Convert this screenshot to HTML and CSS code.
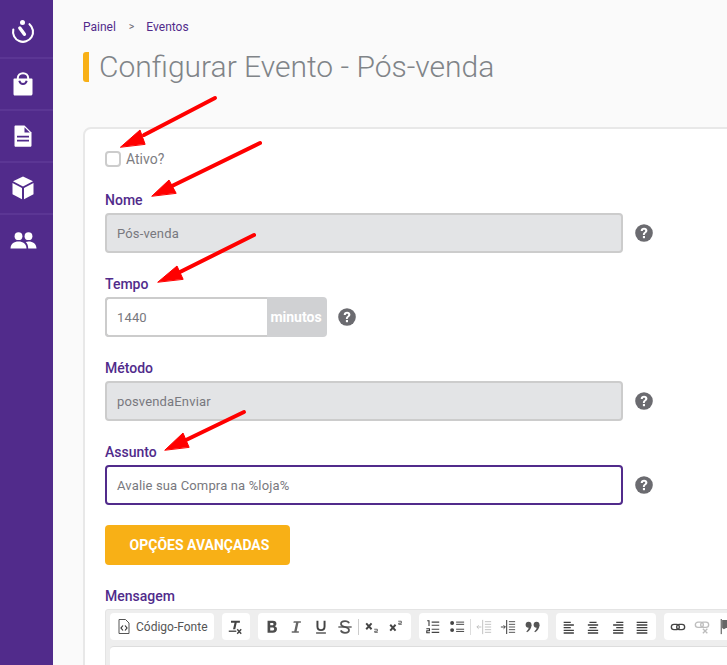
FILE: index.html
```html
<!DOCTYPE html>
<html lang="pt-BR">
<head>
<meta charset="utf-8">
<title>Configurar Evento - Pós-venda</title>
<link rel="stylesheet" href="styles.css">
</head>
<body>
<div class="app">
  <nav class="sidebar">
    <a class="nav-item"><svg width="26" height="26" viewBox="0 0 26 26"><path d="M3.300 10.500A10 10 0 1 0 19.500 5.200" fill="none" stroke="#fff" stroke-width="2.100" stroke-linecap="round"/><circle cx="12.500" cy="3.600" r="2.500" fill="#fff"/><path d="M9.800 9l4.600 6.300" stroke="#fff" stroke-width="3.400" stroke-linecap="round"/></svg></a>
    <a class="nav-item"><svg width="22" height="24" viewBox="0 0 22 24"><path d="M2.300 6.500h17.400c.5 0 .8.300.8.800v14.400c0 1-.8 1.800-1.700 1.800H2.900c-1 0-1.400-.8-1.400-1.800V7.300c0-.5.300-.8.800-.8z" fill="#fff"/><path d="M5.800 8V6a5.200 4.800 0 0 1 10.400 0v2" fill="none" stroke="#fff" stroke-width="2"/><path d="M7.300 8.700c.6 2.200 2 3.300 3.700 3.300s3.100-1.100 3.700-3.300" fill="none" stroke="#512b8b" stroke-width="2"/></svg></a>
    <a class="nav-item"><svg width="18" height="22" viewBox="0 0 18 22"><path d="M1.700.500h8.800l7 7v13c0 .7-.6 1.300-1.200 1.300H1.700c-.7 0-1.200-.6-1.200-1.300V1.700C.5 1.100 1 .5 1.700.5z" fill="#fff"/><path d="M10.500 2.300v5.200h5.300z" fill="#512b8b"/><path d="M3 10.800h12v1.700H3zM3 14.800h12v1.700H3z" fill="#512b8b"/></svg></a>
    <a class="nav-item"><svg width="22" height="24" viewBox="0 0 22 24"><path d="M11 .5l10 4.800L11 10.500 1 5.300z" fill="#fff"/><path d="M.5 7l9.500 5v11.300L.5 18.300zM21.500 7L12 12v11.300l9.500-5z" fill="#fff"/></svg></a>
    <a class="nav-item"><svg width="27" height="17" viewBox="0 0 27 17"><circle cx="8.500" cy="4.200" r="3.900" fill="#fff"/><circle cx="18.500" cy="4.200" r="3.900" fill="#fff"/><path d="M.5 16.500c0-4.500 3.500-7 8-7s8 2.500 8 7z" fill="#fff"/><path d="M18.200 16.500c0-2.600-.8-4.900-2.500-6.400 1-.4 1.900-.6 2.800-.6 4.500 0 8 2.500 8 7z" fill="#fff"/></svg></a>
  </nav>
  <main class="content">
    <div class="breadcrumb"><span>Painel</span><span class="sep">&gt;</span><span>Eventos</span></div>
    <h1 class="title">Configurar Evento - Pós-venda</h1>
    <section class="card">
      <label class="check"><span class="box"></span>Ativo?</label>

      <div class="field">
        <div class="label">Nome</div>
        <div class="row">
          <div class="input disabled wide">Pós-venda</div>
          <svg class="help"><use href="#help"/></svg>
        </div>
      </div>

      <div class="field">
        <div class="label">Tempo</div>
        <div class="row">
          <div class="group">
            <div class="group-input">1440</div>
            <div class="addon">minutos</div>
          </div>
          <svg class="help"><use href="#help"/></svg>
        </div>
      </div>

      <div class="field">
        <div class="label">Método</div>
        <div class="row">
          <div class="input disabled wide">posvendaEnviar</div>
          <svg class="help"><use href="#help"/></svg>
        </div>
      </div>

      <div class="field">
        <div class="label">Assunto</div>
        <div class="row">
          <div class="input focus wide">Avalie sua Compra na %loja%</div>
          <svg class="help"><use href="#help"/></svg>
        </div>
      </div>

      <button class="btn">OPÇÕES AVANÇADAS</button>

      <div class="label msg">Mensagem</div>
      <div class="editor">
        <div class="toolbar">
          <div class="tools"><span class="tool source"><svg width="12" height="15" viewBox="0 0 12 15"><path d="M1 .5h6.500L11 4v10.500H1z" fill="none" stroke="#555" stroke-width="1"/><path d="M5 6.500L3 9l2 2.500M7 6.500L9 9l-2 2.500" fill="none" stroke="#333" stroke-width="1.200"/></svg>Código-Fonte</span></div>
          <div class="tools narrow"><span class="tool"><svg class="ic" viewBox="0 0 18 18"><path d="M4.500 2h10v2.200h-3.600L9.300 11.500H6.800l1.700-7.300h-4z" fill="#444"/><path d="M2 13h8.500v1.500H2z" fill="#444"/><path d="M11.500 11.500l4.500 5M16 11.500l-4.500 5" stroke="#444" stroke-width="1.600"/></svg></span></div>
          <div class="tools main format">
            <span class="tool"><svg class="ic" viewBox="0 0 18 18"><path d="M4 2h6c2.800 0 4 1.400 4 3.300 0 1.300-.7 2.300-1.800 2.800 1.500.4 2.400 1.600 2.400 3.100 0 2.600-1.800 4.300-4.600 4.300H4zM7 4.500v2.600h2.300c.9 0 1.400-.5 1.400-1.300s-.5-1.300-1.400-1.300zM7 9.500v3.400h2.700c1.100 0 1.700-.7 1.700-1.700S10.800 9.500 9.700 9.500z" fill="#4c4c4c" fill-rule="evenodd"/></svg></span>
            <span class="tool"><svg class="ic" viewBox="0 0 18 18"><path d="M6.500 2.500h8v1.800h-2.700l-2.100 9.400h2.500v1.800h-8v-1.800h2.800l2.100-9.400H6z" fill="#666"/></svg></span>
            <span class="tool"><svg class="ic" viewBox="0 0 18 18"><path d="M5 2v6.500c0 2.600 1.500 4 4 4s4-1.400 4-4V2" fill="none" stroke="#444" stroke-width="2.200"/><path d="M3.500 15h11v1.500h-11z" fill="#444"/></svg></span>
            <span class="tool"><svg class="ic" viewBox="0 0 18 18"><path d="M13.500 4.800C13 3.300 11.500 2.500 9 2.500S4.500 3.700 4.500 5.500C4.500 10 13.500 8 13.500 12.300c0 2-2 3.200-4.500 3.200S4.800 14.300 4.300 12.800" fill="none" stroke="#555" stroke-width="2"/><path d="M1.500 8.300h15v1.400h-15z" fill="#444"/></svg></span>
            <span class="divider"></span>
            <span class="tool"><svg class="ic" viewBox="0 0 18 18"><path d="M2.500 5l6 6.500M8.500 5l-6 6.500" stroke="#444" stroke-width="2.200"/><path d="M11.500 11.500h3.500v2.200h-3v1.300h3.500" fill="none" stroke="#555" stroke-width="1"/></svg></span>
            <span class="tool"><svg class="ic" viewBox="0 0 18 18"><path d="M2.500 6.500l6 6.500M8.500 6.500l-6 6.500" stroke="#444" stroke-width="2.200"/><path d="M11.500 2.500h3.500v2.200h-3V6h3.500" fill="none" stroke="#555" stroke-width="1"/></svg></span>
          </div>
          <div class="tools main lists">
            <span class="tool"><svg class="ic" viewBox="0 0 18 18"><path d="M7.500 3.500h8.500M7.500 7h8.500M7.500 11.500h8.500M7.500 15h8.500" stroke="#444" stroke-width="1.300"/><path d="M2.500 2h2v6M1.500 11h3.500v2.200H2v2.300h3.500" fill="none" stroke="#333" stroke-width="1.200"/></svg></span>
            <span class="tool"><svg class="ic" viewBox="0 0 18 18"><circle cx="3.500" cy="4.500" r="2.200" fill="#444"/><circle cx="3.500" cy="12.500" r="2.200" fill="#444"/><path d="M8 3.500h9M8 6h9M8 11.500h9M8 14h9" stroke="#444" stroke-width="1.100"/></svg></span>
            <span class="divider light"></span>
            <span class="tool"><svg class="ic dim" viewBox="0 0 18 18"><path d="M7.500 1v16" stroke="#444" stroke-width="1"/><path d="M10 3h7M10 6h7M10 9h7M10 12h7M10 15h7" stroke="#444" stroke-width="1"/><path d="M1 9h5M1 9l2-2M1 9l2 2" fill="none" stroke="#444" stroke-width="1"/></svg></span>
            <span class="tool"><svg class="ic" viewBox="0 0 18 18"><path d="M7.500 1v16" stroke="#444" stroke-width="1.200"/><path d="M10 3h7M10 6h7M10 9h7M10 12h7M10 15h7" stroke="#444" stroke-width="1"/><path d="M1 9h5M6 9L4 7M6 9l-2 2" fill="none" stroke="#333" stroke-width="1"/></svg></span>
            <span class="tool"><svg class="ic" viewBox="0 0 18 18"><circle cx="4" cy="6.500" r="3.300" fill="#555"/><path d="M7.300 6.500c0 4-2 7-5 8.500l-.8-1c2-1.500 2.700-3.500 2.700-5z" fill="#555"/><circle cx="13" cy="6.500" r="3.300" fill="#555"/><path d="M16.300 6.500c0 4-2 7-5 8.500l-.8-1c2-1.500 2.700-3.500 2.700-5z" fill="#555"/></svg></span>
          </div>
          <div class="tools main align">
            <span class="tool"><svg class="ic" viewBox="0 0 18 18"><path d="M3 3h8v1.500H3zM3 6h11.500v1.500H3zM3 9h8v1.500H3zM3 12h11.500v1.500H3zM3 15h11.500v1.500H3z" fill="#3e3e3e"/></svg></span>
            <span class="tool"><svg class="ic" viewBox="0 0 18 18"><path d="M5 3h8v1.500H5zM3.200 6h11.600v1.500H3.200zM5 9h8v1.500H5zM3.200 12h11.600v1.500H3.200zM3.200 15h11.600v1.500H3.200z" fill="#3e3e3e"/></svg></span>
            <span class="tool"><svg class="ic" viewBox="0 0 18 18"><path d="M7 3h8v1.500H7zM3.500 6H15v1.500H3.500zM7 9h8v1.500H7zM3.500 12H15v1.500H3.500zM3.500 15H15v1.500H3.500z" fill="#3e3e3e"/></svg></span>
            <span class="tool"><svg class="ic" viewBox="0 0 18 18"><path d="M3 3h12v1.500H3zM3 6h12v1.500H3zM3 9h12v1.500H3zM3 12h12v1.500H3zM3 15h12v1.500H3z" fill="#3e3e3e"/></svg></span>
          </div>
          <div class="tools main">
            <span class="tool"><svg class="ic" viewBox="0 0 18 18"><rect x="1.500" y="6" width="9" height="6" rx="3" fill="none" stroke="#444" stroke-width="1.500"/><rect x="7.500" y="6" width="9" height="6" rx="3" fill="none" stroke="#444" stroke-width="1.500"/></svg></span>
            <span class="tool"><svg class="ic dim" viewBox="0 0 18 18"><rect x="1.500" y="3.500" width="9" height="6" rx="3" fill="none" stroke="#444" stroke-width="1.500"/><rect x="7.500" y="3.500" width="9" height="6" rx="3" fill="none" stroke="#444" stroke-width="1.500"/><path d="M10 11l5 5M15 11l-5 5" stroke="#444" stroke-width="1.500"/></svg></span>
            <span class="tool"><svg class="ic" viewBox="0 0 18 18"><path d="M2.500 0v17" stroke="#333" stroke-width="1"/><path d="M3.500 1h9v9H8l-2.500 1.500-2-1.500z" fill="#666"/></svg></span>
          </div>
        </div>
        <div class="edit-area"></div>
      </div>
    </section>
  </main>
</div>

<svg class="arrows" width="727" height="665" viewBox="0 0 727 665">
  <g class="arrow-set">
    <path d="M215 98L144 135" class="shaft"/>
    <path d="M120.700 147L140 130l5 14z"/>
    <path d="M260 143L172 186" class="shaft"/>
    <path d="M152 196l17-16 7 13z"/>
    <path d="M254 235L180 272" class="shaft"/>
    <path d="M158 282l19-16 6 13z"/>
    <path d="M244 412L186 440" class="shaft"/>
    <path d="M165 450l18-17 6 14z"/>
  </g>
</svg>

<svg class="defs" width="0" height="0">
  <symbol id="help" viewBox="0 0 18 18"><circle cx="9" cy="9" r="8.800" fill="#6b6b70"/><path d="M5.700 7c0-2 1.500-3.200 3.400-3.200 1.900 0 3.300 1.100 3.300 2.800 0 2.400-2.600 2.400-2.600 4.300H7.900c0-2.900 2.300-2.900 2.300-4.200 0-.6-.5-1-1.100-1-.8 0-1.200.5-1.300 1.300z" fill="#fff"/><rect x="7.900" y="12" width="2.100" height="2.200" fill="#fff"/></symbol>
</svg>
</body>
</html>
```
FILE: styles.css
```css
* { box-sizing: border-box; }
html, body { margin: 0; height: 100%; overflow: hidden; }
body { background: #fafafa; font-family: Roboto, "Liberation Sans", sans-serif; color: #7a7a80; }
.app { display: flex; width: 727px; height: 665px; overflow: hidden; }
.sidebar { flex: 0 0 53px; background: #512b8b; display: flex; flex-direction: column; }
.nav-item { height: 52px; padding-right: 7px; display: flex; align-items: center; justify-content: center; border-bottom: 2px solid #5b3694; }
.nav-item:first-child { height: 59px; padding-top: 7px; }
.nav-item:last-child { border-bottom: 0; padding-bottom: 2px; }
.content { flex: 1; min-width: 0; padding: 20px 0 0 30px; }
.breadcrumb { display: flex; align-items: center; font-size: 12px; line-height: 14px; color: #512b8b; }
.sep { margin: 0 12px 0 13px; color: #6a6a75; font-size: 10.5px; }
.title { margin: 18px 0 0; height: 30px; padding-left: 10px; border-left: 6px solid #f8b016; border-radius: 3px; font-size: 30px; font-weight: 300; line-height: 30px; color: #808488; white-space: nowrap; }
.card { margin-top: 45px; width: 700px; height: 600px; background: #fff; border: 2px solid #e8e8e8; border-radius: 8px; padding: 21px 20px 0; }
.check { display: flex; align-items: center; font-size: 14px; line-height: 18px; height: 18px; color: #7d7d82; }
.box { width: 16px; height: 16px; margin-right: 5px; border: 2px solid #ccc; border-radius: 4px; background: #fff; }
.field { margin-top: 23px; }
.field + .field { margin-top: 22px; }
.label { font-size: 14px; line-height: 18px; font-weight: 500; color: #512b8b; margin-bottom: 4px; }
.row { display: flex; align-items: center; }
.input { height: 40px; display: flex; align-items: center; padding: 0 10px; font-size: 13px; letter-spacing: .15px; color: #78787e; border: 2px solid #ccc; border-radius: 4px; }
.wide { width: 518px; }
.disabled { background: #e3e4e6; }
.focus { background: #fff; border-color: #512b8b; }
.help { width: 18px; height: 18px; margin-left: 12px; }
.group { display: flex; width: 222px; height: 40px; background: #d0d1d3; border-radius: 4px; }
.group + .help { margin-left: 11px; }
.group-input { width: 162px; height: 40px; display: flex; align-items: center; padding: 0 10px; font-size: 13px; letter-spacing: .15px; color: #78787e; background: #fff; border: 2px solid #ccc; border-radius: 4px 0 0 4px; border-right: 0; }
.addon { flex: 1; display: flex; align-items: center; justify-content: center; padding-right: 2px; font-size: 14px; font-weight: 700; color: #fff; }
.btn { display: block; margin-top: 20px; width: 185px; height: 40px; padding: 0 0 0 4px; background: #f8b016; border: 0; border-radius: 4px; color: #fff; font: 700 14px Roboto, sans-serif; }
.msg { margin-top: 22px; margin-bottom: 4px; }
.editor { width: 680px; background: #eee; border: 1px solid #e4e4e4; border-radius: 3px; padding: 3px 4px 0; }
.toolbar { display: flex; gap: 8px; height: 33px; white-space: nowrap; }
.tools { flex: none; display: flex; align-items: center; height: 27px; padding: 0 2px; background: #fff; border-radius: 4px; }
.narrow { width: 28px; }
.narrow .tool { margin-left: -1px; }
.tool { display: flex; align-items: center; justify-content: center; width: 24px; height: 27px; color: #555; font-size: 12px; }
.main .tool { width: 24.5px; }
.format { width: 153px; }
.lists { width: 129px; }
.align { width: 100px; padding: 0 1px; }
.source { width: auto; gap: 6px; padding: 0 4px 0 6px; }
.ic { width: 16px; height: 16px; }
.dim { opacity: .35; }
.divider { flex: none; width: 1px; height: 16px; margin: 0 .5px; background: #ccc; }
.light { background: #ddd; }
.edit-area { height: 40px; background: #fff; border-top: 1px solid #ddd; border-radius: 4px 0 0 0; }
.arrows { position: absolute; left: 0; top: 0; pointer-events: none; }
.arrow-set { fill: #f00; stroke: #f00; stroke-width: 1; stroke-linejoin: round; stroke-linecap: round; }
.shaft { fill: none; stroke-width: 4; }
.defs { position: absolute; }
```
